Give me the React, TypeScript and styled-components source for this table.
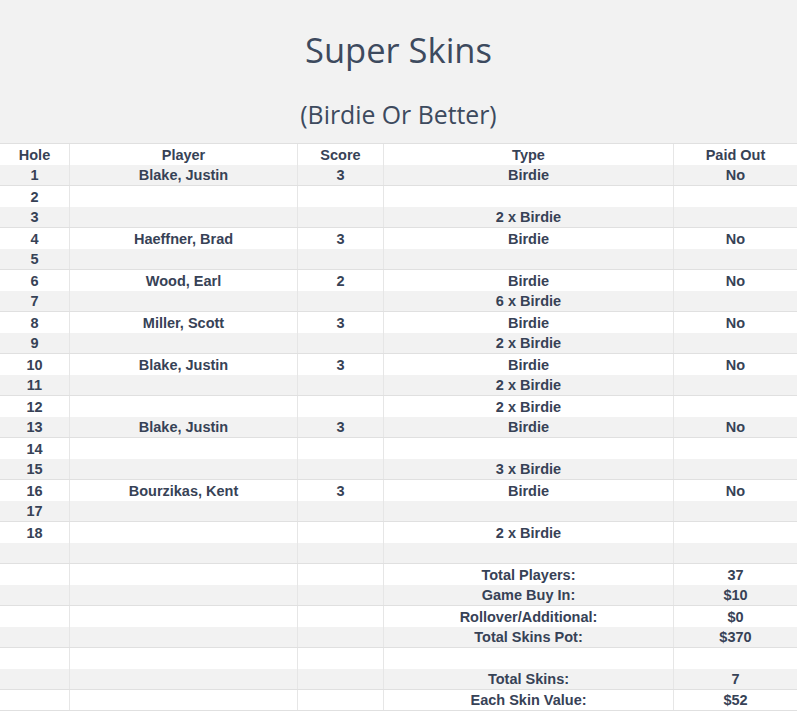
import React from 'react';
import styled, { createGlobalStyle } from 'styled-components';

const GlobalStyle = createGlobalStyle`
  body {
    margin: 0;
    background: #ffffff;
  }
`;

type HoleRow = {
  hole?: string;
  player?: string;
  score?: string;
  type?: string;
  paid?: string;
};

const rows: HoleRow[] = [
  { hole: '1', player: 'Blake, Justin', score: '3', type: 'Birdie', paid: 'No' },
  { hole: '2' },
  { hole: '3', type: '2 x Birdie' },
  { hole: '4', player: 'Haeffner, Brad', score: '3', type: 'Birdie', paid: 'No' },
  { hole: '5' },
  { hole: '6', player: 'Wood, Earl', score: '2', type: 'Birdie', paid: 'No' },
  { hole: '7', type: '6 x Birdie' },
  { hole: '8', player: 'Miller, Scott', score: '3', type: 'Birdie', paid: 'No' },
  { hole: '9', type: '2 x Birdie' },
  { hole: '10', player: 'Blake, Justin', score: '3', type: 'Birdie', paid: 'No' },
  { hole: '11', type: '2 x Birdie' },
  { hole: '12', type: '2 x Birdie' },
  { hole: '13', player: 'Blake, Justin', score: '3', type: 'Birdie', paid: 'No' },
  { hole: '14' },
  { hole: '15', type: '3 x Birdie' },
  { hole: '16', player: 'Bourzikas, Kent', score: '3', type: 'Birdie', paid: 'No' },
  { hole: '17' },
  { hole: '18', type: '2 x Birdie' },
  {},
  { type: 'Total Players:', paid: '37' },
  { type: 'Game Buy In:', paid: '$10' },
  { type: 'Rollover/Additional:', paid: '$0' },
  { type: 'Total Skins Pot:', paid: '$370' },
  {},
  { type: 'Total Skins:', paid: '7' },
  { type: 'Each Skin Value:', paid: '$52' },
];

const Page = styled.div`
  width: 797px;
  font-family: 'Liberation Sans', Arial, sans-serif;
  color: #374256;
`;

const Banner = styled.div`
  display: flex;
  flex-direction: column;
  align-items: center;
  box-sizing: border-box;
  height: 144px;
  padding-top: 30px;
  background: #f2f2f2;
  border-bottom: 1px solid #e0e0e0;
  font-family: 'Open Sans', 'Noto Sans', sans-serif;
  color: #3d4a5e;
`;

const Title = styled.div`
  font-size: 34.5px;
  line-height: 40px;
  font-weight: 400;
`;

const Subtitle = styled.div`
  margin-top: 29px;
  font-size: 24.8px;
  line-height: 30px;
  font-weight: 400;
`;

const Row = styled.div<{ $shaded?: boolean; $last?: boolean }>`
  display: grid;
  grid-template-columns: 69px 228px 86px 290px 124px;
  box-sizing: border-box;
  height: 21px;
  background: ${(p) => (p.$shaded ? '#f2f2f2' : '#ffffff')};
  border-bottom: ${(p) => (p.$shaded || p.$last ? '1px solid #e0e0e0' : 'none')};
`;

const Cell = styled.div`
  display: flex;
  align-items: center;
  justify-content: center;
  font-size: 14.5px;
  font-weight: 700;
  white-space: nowrap;

  & + & {
    border-left: 1px solid #e6e6e6;
  }
`;

const App: React.FC = (): JSX.Element => {
  return (
    <Page>
      <GlobalStyle />
      <Banner>
        <Title>Super Skins</Title>
        <Subtitle>(Birdie Or Better)</Subtitle>
      </Banner>
      <Row>
        <Cell>Hole</Cell>
        <Cell>Player</Cell>
        <Cell>Score</Cell>
        <Cell>Type</Cell>
        <Cell>Paid Out</Cell>
      </Row>
      {rows.map((r, i) => (
        <Row key={i} $shaded={i % 2 === 0} $last={i === rows.length - 1}>
          <Cell>{r.hole}</Cell>
          <Cell>{r.player}</Cell>
          <Cell>{r.score}</Cell>
          <Cell>{r.type}</Cell>
          <Cell>{r.paid}</Cell>
        </Row>
      ))}
    </Page>
  );
};

export default App;
